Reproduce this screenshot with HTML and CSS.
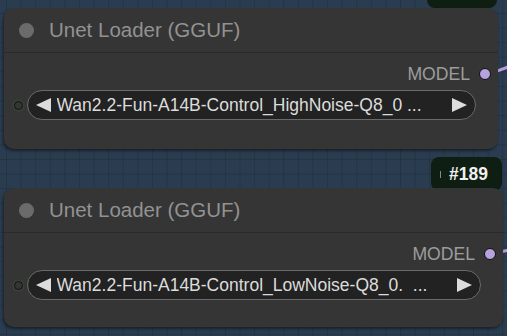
FILE: index.html
```html
<!DOCTYPE html>
<html lang="en">

<head>
    <meta charset="UTF-8">
    <meta name="viewport" content="width=device-width, initial-scale=1.0">
    <title>Unet Loader nodes</title>
    <link rel="stylesheet" href="styles.css">
</head>

<body>
    <div class="canvas">
        <svg class="links" width="507" height="336" viewBox="0 0 507 336">
            <path d="M490 73 C 498 71, 503 69, 510 66" />
            <path d="M494 253 C 500 252, 504 251, 510 250" />
        </svg>

        <div class="badge badge-top"></div>

        <div class="node node-high">
            <div class="node-title">
                <span class="title-dot"></span>
                <span class="title-text">Unet Loader (GGUF)</span>
            </div>
            <div class="node-body">
                <div class="slot-row">
                    <span class="slot-label">MODEL</span>
                    <span class="out-dot"></span>
                </div>
                <div class="widget-row">
                    <span class="in-dot"></span>
                    <div class="combo">
                        <svg class="arrow" width="15" height="14" viewBox="0 0 15 14"><polygon points="15,0 15,14 0,7" /></svg>
                        <span class="combo-value">Wan2.2-Fun-A14B-Control_HighNoise-Q8_0 ...</span>
                        <svg class="arrow" width="15" height="14" viewBox="0 0 15 14"><polygon points="0,0 0,14 15,7" /></svg>
                    </div>
                </div>
            </div>
        </div>

        <div class="badge badge-id"><span class="badge-mark"></span>#189</div>

        <div class="node node-low">
            <div class="node-title">
                <span class="title-dot"></span>
                <span class="title-text">Unet Loader (GGUF)</span>
            </div>
            <div class="node-body">
                <div class="slot-row">
                    <span class="slot-label">MODEL</span>
                    <span class="out-dot"></span>
                </div>
                <div class="widget-row">
                    <span class="in-dot"></span>
                    <div class="combo">
                        <svg class="arrow" width="15" height="14" viewBox="0 0 15 14"><polygon points="15,0 15,14 0,7" /></svg>
                        <span class="combo-value">Wan2.2-Fun-A14B-Control_LowNoise-Q8_0.  ...</span>
                        <svg class="arrow" width="15" height="14" viewBox="0 0 15 14"><polygon points="0,0 0,14 15,7" /></svg>
                    </div>
                </div>
            </div>
        </div>
    </div>
</body>

</html>
```

FILE: styles.css
```css
body {
    margin: 0;
    padding: 0;
    font-family: 'Liberation Sans', Arial, sans-serif;
    background-color: #2a3c4f;
    overflow: hidden;
}

.canvas {
    position: relative;
    width: 507px;
    height: 336px;
    background-color: #2a3c4f;
    background-image:
        linear-gradient(to right, rgba(0, 0, 0, 0.13) 1px, transparent 1px),
        linear-gradient(to bottom, rgba(0, 0, 0, 0.13) 1px, transparent 1px);
    background-size: 14.6px 14.6px;
    background-position: 6px 13px;
}

.links {
    position: absolute;
    left: 0;
    top: 0;
}

.links path {
    fill: none;
    stroke: #b39ddb;
    stroke-width: 3;
}

/* nodes sit on a free canvas */
.node {
    position: absolute;
    left: 4px;
    background: #353535;
    border-radius: 10px;
    box-shadow: -1px 2px 3px rgba(0, 0, 0, 0.45);
    display: flex;
    flex-direction: column;
}

.node-high {
    top: 8px;
    width: 494px;
    height: 141px;
}

.node-low {
    top: 188px;
    width: 499px;
    height: 139px;
}

.node-title {
    height: 44px;
    border-bottom: 1px solid #2a2a2a;
    display: flex;
    align-items: center;
    padding-left: 15px;
    gap: 15px;
}

.title-dot {
    width: 15px;
    height: 15px;
    border-radius: 50%;
    background: #6b6b6b;
}

.title-text {
    color: #929292;
    font-size: 20.5px;
}

.node-body {
    padding-top: 6px;
    display: flex;
    flex-direction: column;
    gap: 1px;
}

.slot-row {
    height: 30px;
    display: flex;
    align-items: center;
    justify-content: flex-end;
    padding-right: 7px;
    gap: 9px;
}

.slot-label {
    color: #9c9c9c;
    font-size: 17.6px;
}

.out-dot {
    width: 10px;
    height: 10px;
    border-radius: 50%;
    background: #b7a2e0;
    border: 1.5px solid #111;
}

.widget-row {
    height: 30px;
    display: flex;
    align-items: center;
    padding-left: 10px;
    padding-right: 22px;
    gap: 3.5px;
}

.in-dot {
    width: 7px;
    height: 7px;
    border-radius: 50%;
    border: 1.5px solid #0d150d;
    box-shadow: 0 0 3px rgba(80, 160, 80, 0.45);
}

.combo {
    flex: 1;
    height: 28px;
    background: #222;
    border: 1px solid #6a6a6a;
    border-radius: 15px;
    display: flex;
    align-items: center;
    padding: 0 8px;
    gap: 6px;
}

.arrow polygon {
    fill: #dcdcdc;
}

.combo-value {
    flex: 1;
    color: #dcdcdc;
    font-size: 17.5px;
    white-space: pre;
    overflow: hidden;
}

.badge {
    position: absolute;
    background: #0f1e12;
    border-radius: 8px;
    color: #f0f0f0;
    font-weight: bold;
    font-size: 17.5px;
    display: flex;
    align-items: center;
}

.badge-top {
    left: 427px;
    top: -25px;
    width: 70px;
    height: 33px;
}

.badge-id {
    left: 431px;
    top: 157px;
    width: 71px;
    height: 34px;
    box-sizing: border-box;
    padding-left: 9px;
    gap: 8px;
}

.badge-mark {
    width: 1px;
    height: 7px;
    background: #8a8a8a;
}
```
